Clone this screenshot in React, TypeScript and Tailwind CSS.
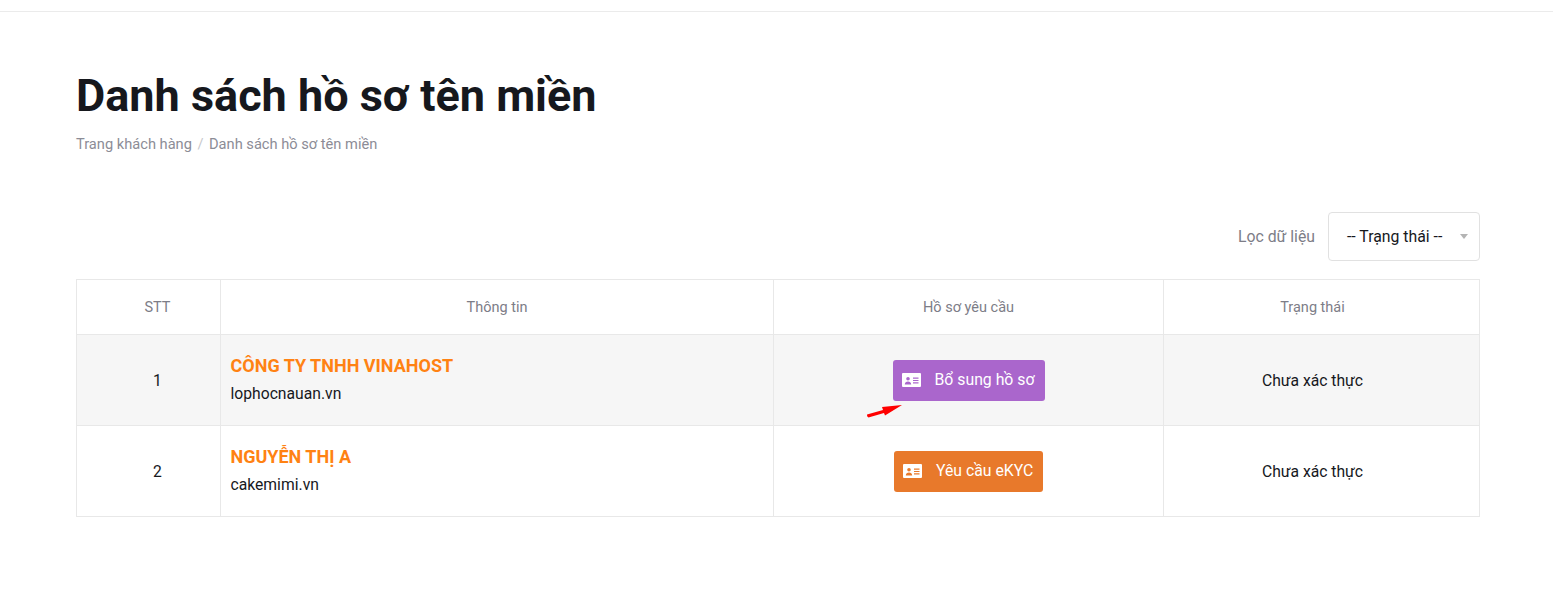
import React from "react";

type Row = {
  id: number;
  name: string;
  domain: string;
  action: string;
  color: string;
  width: string;
};

const rows: Row[] = [
  { id: 1, name: "CÔNG TY TNHH VINAHOST", domain: "lophocnauan.vn", action: "Bổ sung hồ sơ", color: "bg-[#aa66cc]", width: "w-[152px]" },
  { id: 2, name: "NGUYỄN THỊ A", domain: "cakemimi.vn", action: "Yêu cầu eKYC", color: "bg-[#e8792b]", width: "w-[149px]" },
];

function CardIcon() {
  return (
    <svg width="19" height="14" viewBox="0 0 19 14" className="shrink-0">
      <path
        fill="#fff"
        fillRule="evenodd"
        d="M1 0h17a1 1 0 0 1 1 1v12a1 1 0 0 1-1 1H1a1 1 0 0 1-1-1V1a1 1 0 0 1 1-1z
           M6 4a1.800 1.800 0 1 0 0 3.600a1.800 1.800 0 1 0 0-3.600z
           M2.800 11.500h6.400c0-1.700-1.400-2.900-3.200-2.900s-3.200 1.200-3.200 2.900z
           M11 4.500v1.200h5.500v-1.200z
           M11 6.900v1.200h5.500v-1.200z
           M11 9.300v1.200h5.500v-1.200z"
      />
    </svg>
  );
}

export default function App() {
  return (
    <div className="min-h-[602px] bg-white font-['Roboto',sans-serif] text-[#212529]">
      <div className="h-3 border-b border-[#ebebeb]" />
      <div className="px-[76px] pr-[73px] pt-[56px]">
        <h1 className="text-[45px] leading-[56px] font-bold text-[#16181d]">Danh sách hồ sơ tên miền</h1>
        <div className="mt-[8px] flex items-center text-[14.65px] leading-[24px] text-[#8c8c96]">
          <span>Trang khách hàng</span>
          <span className="mx-[5.5px] text-[#c8c8cc]">/</span>
          <span>Danh sách hồ sơ tên miền</span>
        </div>

        <div className="mt-[56px] flex items-center justify-end">
          <span className="mr-[13px] text-[15.8px] text-[#7d7d87]">Lọc dữ liệu</span>
          <div className="flex h-[49px] w-[152px] items-center rounded-[4px] border border-[#e1e1e1] pl-[18px] pr-[11px]">
            <span className="flex-1 text-[15.8px] text-[#16181d]">-- Trạng thái --</span>
            <span className="h-0 w-0 border-x-[4px] border-t-[5px] border-x-transparent border-t-[#b4b4b4]" />
          </div>
        </div>

        <table className="mt-[18px] w-[1404px] table-fixed border-collapse text-[14.5px]">
          <thead>
            <tr className="h-[55px] text-[#7d7d87]">
              <th className="w-[144px] border border-[#e8e8e8] pl-[18px] pt-[2px] font-normal">STT</th>
              <th className="w-[553px] border border-[#e8e8e8] pt-[2px] font-normal">Thông tin</th>
              <th className="w-[390px] border border-[#e8e8e8] pt-[2px] font-normal">Hồ sơ yêu cầu</th>
              <th className="border border-[#e8e8e8] pr-[18px] pt-[2px] font-normal">Trạng thái</th>
            </tr>
          </thead>
          <tbody>
            {rows.map((row) => (
              <tr key={row.id} className={row.id === 1 ? "h-[91px] bg-[#f6f6f6]" : "h-[91px]"}>
                <td className="border border-[#e8e8e8] pl-[18px] pt-[2px] text-center text-[15.7px] text-[#16181d]">{row.id}</td>
                <td className="border border-[#e8e8e8] px-[9.5px] pb-[2px]">
                  <div className="text-[18px] leading-[27px] font-bold text-[#ff8213]">{row.name}</div>
                  <div className="mt-[1px] text-[15.7px] leading-[27px] text-[#16181d]">{row.domain}</div>
                </td>
                <td className="border border-[#e8e8e8]">
                  <div className="relative flex justify-center">
                    <button className={`flex h-[41px] items-center gap-[14px] rounded-[3px] pl-[9px] text-[15.8px] text-white ${row.width} ${row.color}`}>
                      <CardIcon />
                      <span>{row.action}</span>
                    </button>
                    {row.id === 1 && (
                      <svg width="38" height="18" viewBox="0 0 38 18" className="absolute left-[92px] top-[40px]">
                        <path d="M1 14.500L17 10L16 7L36 5L19 15.500L18 13L2.500 17.500Q0.500 16.500 1 14.500z" fill="#ff0000" />
                      </svg>
                    )}
                  </div>
                </td>
                <td className="border border-[#e8e8e8] pr-[18px] pt-[2px] text-center text-[15.7px] text-[#16181d]">Chưa xác thực</td>
              </tr>
            ))}
          </tbody>
        </table>
      </div>
    </div>
  );
}
